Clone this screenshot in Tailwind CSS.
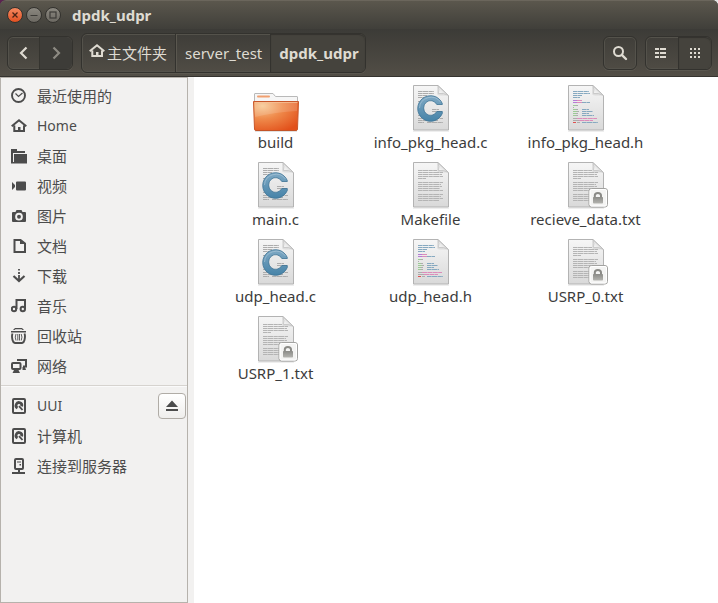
<!DOCTYPE html>
<html lang="zh-CN">
<head>
<meta charset="utf-8">
<title>dpdk_udpr</title>
<script src="https://cdn.jsdelivr.net/npm/@tailwindcss/browser@4"></script>
</head>
<body class="min-h-screen flex flex-col bg-white font-['Noto_Sans','Noto_Sans_CJK_SC',sans-serif] text-[15px] leading-5 text-[#3c3c3c]">

<svg class="absolute size-0" aria-hidden="true">
  <defs>
    <linearGradient id="paper" x1="0" y1="0" x2="0" y2="1"><stop offset="0" stop-color="#f6f6f6"/><stop offset="1" stop-color="#d9d9d9"/></linearGradient>
    <linearGradient id="fold" x1="0" y1="1" x2="1" y2="0"><stop offset="0" stop-color="#ffffff"/><stop offset=".5" stop-color="#e4e4e4"/><stop offset="1" stop-color="#b8b8b8"/></linearGradient>
    <linearGradient id="blue" x1="0" y1="0" x2="0" y2="1"><stop offset="0" stop-color="#7fa9c4"/><stop offset="1" stop-color="#4683a8"/></linearGradient>
    <radialGradient id="orange" cx=".2" cy=".15" r="1"><stop offset="0" stop-color="#f7c892"/><stop offset=".45" stop-color="#ef8a4b"/><stop offset="1" stop-color="#e2501a"/></radialGradient>
    <linearGradient id="lockfill" x1="0" y1="0" x2="0" y2="1"><stop offset="0" stop-color="#8b8b87"/><stop offset="1" stop-color="#b4b4b0"/></linearGradient>

    <symbol id="page" viewBox="0 0 48 48">
      <path d="M6 47.2H42" stroke="#000" stroke-opacity=".1"/>
      <path d="M6.500 1.500H31L41.500 11.500V46H6.500Z" fill="url(#paper)" stroke="#b3b3b3"/>
      <path d="M30 2V9Q30 11.500 33 11.500H41Z" fill="#000" fill-opacity=".08"/>
      <path d="M31 2Q32.500 5 31.500 9.500Q37 8.800 41 11.200Z" fill="url(#fold)" stroke="#bdbdbd" stroke-width=".7"/>
    </symbol>
    <symbol id="text" viewBox="0 0 48 48">
      <use href="#page"/>
      <path d="M11 9.500H30M11 11.500H36M11 13.500H35M11 15.500H36M11 17.500H19M11 21.500H36M11 23.500H34M11 25.500H35M11 27.500H33M11 29.500H36M11 33.500H36M11 35.500H34M11 37.500H36M11 39.500H32" stroke="#b4b4b4" stroke-dasharray="4 .4 6 .4"/>
    </symbol>
    <symbol id="csource" viewBox="0 0 48 48">
      <use href="#page"/>
      <path d="M11 7.500H27M11 9.500H27M11 11.500H20M11 13.500H17M11 17.500H20M25 25.500H32M25 27.500H35M11 31.500H18M11 34.500H36M11 36.500H31M11 38.500H17M20 38.500H36" stroke="#acacac" stroke-dasharray="4 .4 6 .4"/>
      <path d="M35.300 19.500A12.800 12.800 0 1 0 35.300 29.500L35.300 27.500H29.800A7 7.400 0 1 1 29.800 20.500H35.300Z" fill="url(#blue)" stroke="#3c7294" stroke-width=".8"/>
      <path d="M12.500 24A11.600 11.400 0 0 1 33.500 18" fill="none" stroke="#b3cddd" stroke-opacity=".7" stroke-width=".8"/>
    </symbol>
    <symbol id="header" viewBox="0 0 48 48">
      <use href="#page"/>
      <path d="M11 7.500H27M11 9.500H28M11 11.500H20M11 13.500H18M20 18.500H28M20 25.500H27M20 27.500H31M20 29.500H27M20 31.500H32M20 38.500H36" stroke="#86a9c0" stroke-dasharray="4 .4 6 .4"/>
      <path d="M11 16.500H15M11 18.500H15" stroke="#b57bd6"/>
      <path d="M15 16.500H20M15 18.500H20M15 34.500H35M17 36.500H31" stroke="#dc8cba" stroke-dasharray="5 .4"/>
      <path d="M11 21.500H14M11 25.500H14M11 27.500H15M11 29.500H14M11 31.500H14" stroke="#9bcb94"/>
      <path d="M14 21.500H16M11 23.500H12M14 25.500H16M15 27.500H17M14 29.500H16M14 31.500H16M11 34.500H15M11 36.500H17M15 38.500H18" stroke="#acacac"/>
      <path d="M11 38.500H14" stroke="#e05050"/>
    </symbol>
    <symbol id="locked" viewBox="0 0 48 48">
      <use href="#text"/>
      <rect x="27" y="27.500" width="18.500" height="18.500" rx="2.500" fill="#f4f4f3" stroke="#a2a2a0"/>
      <rect x="28" y="28.500" width="16.500" height="16.500" rx="1.500" fill="none" stroke="#fff"/>
      <path d="M32.800 37V34.500Q32.800 32 35.900 32Q39 32 39 34.500V37" fill="none" stroke="#8a8a86" stroke-width="2"/>
      <rect x="31" y="36" width="10" height="6.500" rx=".8" fill="url(#lockfill)"/>
    </symbol>
    <symbol id="folder" viewBox="0 0 48 48">
      <path d="M2.500 18V10Q2.500 9.500 3 9.500H21L23.500 12.500H45Q45.500 12.500 45.500 13V18Z" fill="#f6f6f6" stroke="#b9b9b9"/>
      <rect x="5" y="11.500" width="13" height="2" rx="1" fill="#f1a070"/>
      <path d="M1.500 17.500H46.500L45.500 45Q45.400 46.500 44 46.500H4Q2.600 46.500 2.500 45Z" fill="url(#orange)" stroke="#c9572a"/>
      <path d="M2.700 18.700H45.300L45 27Q24 28 3 33Z" fill="#fff" fill-opacity=".14"/>
      <path d="M3 18.500H45.500" stroke="#f8c49c" stroke-opacity=".8"/>
      <path d="M3 47.300H45" stroke="#000" stroke-opacity=".15"/>
    </symbol>
    <symbol id="house" viewBox="0 0 16 16">
      <path d="M.7 8.300L8 2.200L15.300 8.300M3.300 7.500V13H13V7.500" fill="none" stroke="currentColor" stroke-width="2"/>
      <path d="M7 9H9.500V13H7Z" fill="currentColor"/>
    </symbol>
    <symbol id="disk" viewBox="0 0 16 16">
      <rect x="2" y="1" width="12" height="14" rx="1" fill="none" stroke="currentColor" stroke-width="2"/>
      <path d="M6.500 10A2.900 2.900 0 1 1 10.700 8.300" fill="none" stroke="currentColor" stroke-width="2.700"/>
      <path d="M8 8.200L11.500 12" stroke="currentColor" stroke-width="1.800"/>
    </symbol>
  </defs>
</svg>

<div class="bg-linear-to-r from-[#5b2350] to-[#e4e4e4]">
<header class="rounded-t-md bg-[#3c3b37] text-[#dfdbd2]">
  <div class="flex h-[29px] items-center gap-[3px] rounded-t-md border-t border-[#6b665c] bg-linear-to-b from-[#5b574d] to-[#403f3a] px-[7px]">
    <button type="button" aria-label="关闭" class="size-4 rounded-full border border-[#33322e] bg-linear-to-b from-[#f5895f] to-[#e2501f] text-[#4a2415]">
      <svg viewBox="0 0 14 14" class="size-full"><path d="M4.500 4.500L9.500 9.500M9.500 4.500L4.500 9.500" stroke="currentColor" stroke-width="1.300"/></svg>
    </button>
    <button type="button" aria-label="最小化" class="size-4 rounded-full border border-[#33322e] bg-linear-to-b from-[#8b8880] to-[#6c6962] text-[#3c3b37]">
      <svg viewBox="0 0 14 14" class="size-full"><path d="M3.500 7.500H10.500" stroke="currentColor"/></svg>
    </button>
    <button type="button" aria-label="最大化" class="size-4 rounded-full border border-[#33322e] bg-linear-to-b from-[#8b8880] to-[#6c6962] text-[#3c3b37]">
      <svg viewBox="0 0 14 14" class="size-full"><rect x="4" y="4" width="6" height="6" fill="none" stroke="currentColor" stroke-width="1.200"/></svg>
    </button>
    <h1 class="ml-2 font-bold">dpdk_udpr</h1>
  </div>

  <div class="flex h-12 items-center border-b border-[#35332f] bg-linear-to-b from-[#3c3b37] to-[#524e46] pr-1.5 pl-[7px]">
    <div class="flex h-[34px] rounded-md border border-[#33322e] shadow-[inset_0_0_0_1px_#54524b,0_1px_0_#5a574f]">
      <button type="button" aria-label="后退" class="flex w-8 items-center justify-center border-r border-[#35342f]">
        <svg viewBox="0 0 16 16" class="size-4"><path d="M10.500 2.500L5 8L10.500 13.500" fill="none" stroke="currentColor" stroke-width="2.200"/></svg>
      </button>
      <button type="button" aria-label="前进" disabled class="flex w-8 items-center justify-center rounded-r-md bg-[#3d3c38] text-[#8d8a82]">
        <svg viewBox="0 0 16 16" class="size-4"><path d="M5.500 2.500L11 8L5.500 13.500" fill="none" stroke="currentColor" stroke-width="2.200"/></svg>
      </button>
    </div>

    <nav aria-label="路径" class="ml-2 flex h-10 rounded-md border border-[#33322e] shadow-[inset_0_0_0_1px_#54524b,0_1px_0_#5a574f]">
      <a href="#" class="flex items-center border-r border-[#33322e] pr-2 pl-[7px]">
        <svg class="mr-0.5 mb-1 size-4"><use href="#house"/></svg><span>主文件夹</span>
      </a>
      <a href="#" class="flex items-center border-r border-l border-r-[#33322e] border-l-[#5a574f] px-2">server_test</a>
      <a href="#" aria-current="page" class="flex items-center rounded-r-md bg-[#45433d] pr-1.5 pl-2 font-bold shadow-[inset_0_1px_1px_#33322e]">dpdk_udpr</a>
    </nav>

    <button type="button" aria-label="搜索" class="ml-auto flex h-[34px] w-[34px] items-center justify-center rounded-md border border-[#33322e] shadow-[inset_0_0_0_1px_#54524b,0_1px_0_#5a574f]">
      <svg viewBox="0 0 16 16" class="size-4"><circle cx="6.500" cy="6.500" r="4.500" fill="none" stroke="currentColor" stroke-width="2"/><path d="M9.800 9.800L14 14" stroke="currentColor" stroke-width="2.400" stroke-linecap="round"/></svg>
    </button>
    <div class="ml-2 flex h-[34px] rounded-md border border-[#33322e] shadow-[inset_0_0_0_1px_#54524b,0_1px_0_#5a574f]">
      <button type="button" aria-label="列表视图" class="flex w-8 items-center justify-center">
        <svg viewBox="0 0 16 16" class="size-4"><path d="M1 4H5M6 4H12M1 8H5M6 8H12M1 12H5M6 12H12" stroke="currentColor" stroke-width="2"/></svg>
      </button>
      <button type="button" aria-label="图标视图" aria-pressed="true" class="flex w-[33px] items-center justify-center rounded-r-md border-l border-[#33322e] bg-[#45433d] shadow-[inset_0_1px_1px_#33322e]">
        <svg viewBox="0 0 16 16" class="size-4"><path d="M3 4H5M7 4H9M11 4H13M3 8H5M7 8H9M11 8H13M3 12H5M7 12H9M11 12H13" stroke="currentColor" stroke-width="2"/></svg>
      </button>
    </div>
  </div>
</header>
</div>

<div class="flex flex-1">
  <aside class="flex w-[194px] shrink-0 bg-[#f2f1f0] pr-1.5 text-[#4c4c4c]">
    <nav aria-label="位置" class="flex-1 border border-[#b6b2ac] pt-[3px]">
      <ul>
        <li><a href="#" class="flex h-[30px] items-center gap-2.5 pl-2.5"><svg viewBox="0 0 16 16" class="size-4"><circle cx="7.500" cy="7.500" r="6.500" fill="none" stroke="currentColor" stroke-width="1.900"/><path d="M4.500 5.500L7.500 8.500L11.500 5" fill="none" stroke="currentColor" stroke-width="1.200"/></svg>最近使用的</a></li>
        <li><a href="#" class="flex h-[30px] items-center gap-2.5 pl-2.5"><svg class="size-4"><use href="#house"/></svg><span class="text-sm">Home</span></a></li>
        <li><a href="#" class="flex h-[30px] items-center gap-2.5 pl-2.5"><svg viewBox="0 0 16 16" class="size-4"><path d="M0 1H6V3H14V5H2V14H3V6H16V15.500H0Z" fill="currentColor"/></svg>桌面</a></li>
        <li><a href="#" class="flex h-[30px] items-center gap-2.5 pl-2.5"><svg viewBox="0 0 16 16" class="size-4"><path d="M1 4L4 7V9L1 12ZM6 3.500H14Q15 3.500 15 4.500V11.500Q15 12.500 14 12.500H6Q5 12.500 5 11.500V4.500Q5 3.500 6 3.500Z" fill="currentColor"/></svg>视频</a></li>
        <li><a href="#" class="flex h-[30px] items-center gap-2.5 pl-2.5"><svg viewBox="0 0 16 16" class="size-4"><path d="M5.500 2H10.500L11.500 4H14Q15 4 15 5V13Q15 14 14 14H2Q1 14 1 13V5Q1 4 2 4H4.500Z" fill="currentColor"/><circle cx="8" cy="8.700" r="2.900" fill="none" stroke="#f2f1f0" stroke-width="1.900"/></svg>图片</a></li>
        <li><a href="#" class="flex h-[30px] items-center gap-2.5 pl-2.5"><svg viewBox="0 0 16 16" class="size-4"><path d="M3.500 2H9.500L14 5.500V14H3.500Z" fill="none" stroke="currentColor" stroke-width="2"/><path d="M9 2V6H14Z" fill="currentColor"/></svg>文档</a></li>
        <li><a href="#" class="flex h-[30px] items-center gap-2.5 pl-2.5"><svg viewBox="0 0 16 16" class="size-4"><path d="M8 1V2.500M8 4V6M8 7V13" stroke="currentColor" stroke-width="1.800"/><path d="M2.500 8L8 13L13.500 8" fill="none" stroke="currentColor" stroke-width="2.200"/></svg>下载</a></li>
        <li><a href="#" class="flex h-[30px] items-center gap-2.5 pl-2.5"><svg viewBox="0 0 16 16" class="size-4"><circle cx="3" cy="11" r="2.200" fill="none" stroke="currentColor" stroke-width="2"/><circle cx="11.800" cy="11" r="2.200" fill="none" stroke="currentColor" stroke-width="2"/><path d="M5.500 11V2H14V11" fill="none" stroke="currentColor" stroke-width="2"/></svg>音乐</a></li>
        <li><a href="#" class="flex h-[30px] items-center gap-2.5 pl-2.5"><svg viewBox="0 0 16 16" class="size-4"><path d="M0 3H15V4.500H0ZM2 2L4 0H11L13 2H11.500L10.500 1.300H4.500L3.500 2Z" fill="currentColor"/><path d="M1.500 5.500Q.5 8 1.500 12Q2 14.500 4 15H11Q13 14.500 13.500 12Q14.500 8 13.500 5.500" fill="none" stroke="currentColor" stroke-width="1.900"/><path d="M5 6Q3.500 9 5 12.500M6.800 6V12.500M8.500 6V12.500M10.200 6Q11.700 9 10.200 12.500" fill="none" stroke="currentColor" stroke-width=".9"/></svg>回收站</a></li>
        <li><a href="#" class="flex h-[30px] items-center gap-2.5 pl-2.5"><svg viewBox="0 0 16 16" class="size-4"><path d="M7 3V2H15V8.500H12" fill="none" stroke="currentColor" stroke-width="2"/><rect x="1" y="5" width="8.500" height="6" rx="1" fill="none" stroke="currentColor" stroke-width="2"/><path d="M3 12H7.500L9 15H1.500ZM11.500 9H14L15 12H11.500Z" fill="currentColor"/></svg>网络</a></li>
      </ul>
      <ul class="mt-1 border-t border-[#d6d3cf] pt-[5px] shadow-[inset_0_1px_0_#fafafa]">
        <li class="flex h-[30px] items-center">
          <a href="#" class="flex flex-1 items-center gap-2.5 pl-2.5"><svg class="size-4"><use href="#disk"/></svg><span class="text-sm">UUI</span></a>
          <button type="button" aria-label="弹出 UUI" class="mr-px flex h-[26px] w-7 items-center justify-center rounded border border-[#b0aca6] bg-linear-to-b from-white to-[#efeeec]">
            <svg viewBox="0 0 14 14" class="size-3.5"><path d="M7 1.500L13 8H1ZM1 10H13V12H1Z" fill="currentColor"/></svg>
          </button>
        </li>
        <li><a href="#" class="flex h-[30px] items-center gap-2.5 pl-2.5"><svg class="size-4"><use href="#disk"/></svg>计算机</a></li>
        <li><a href="#" class="flex h-[30px] items-center gap-2.5 pl-2.5"><svg viewBox="0 0 16 16" class="size-4"><rect x="4" y="1" width="8" height="10" rx="1" fill="none" stroke="currentColor" stroke-width="2"/><path d="M6 4H10" stroke="currentColor"/><path d="M8.500 6H10V7.500H8.500Z" fill="currentColor"/><path d="M8 11V15M1 15H14" stroke="currentColor" stroke-width="2"/></svg>连接到服务器</a></li>
      </ul>
    </nav>
  </aside>

  <main class="flex-1 bg-white pt-[7px] pl-1">
    <ul class="grid grid-cols-[repeat(auto-fill,155px)] gap-y-[9px]">
      <li><a href="#" class="flex flex-col items-center"><svg class="size-12"><use href="#folder"/></svg><span>build</span></a></li>
      <li><a href="#" class="flex flex-col items-center"><svg class="size-12"><use href="#csource"/></svg><span>info_pkg_head.c</span></a></li>
      <li><a href="#" class="flex flex-col items-center"><svg class="size-12"><use href="#header"/></svg><span>info_pkg_head.h</span></a></li>
      <li><a href="#" class="flex flex-col items-center"><svg class="size-12"><use href="#csource"/></svg><span>main.c</span></a></li>
      <li><a href="#" class="flex flex-col items-center"><svg class="size-12"><use href="#text"/></svg><span>Makefile</span></a></li>
      <li><a href="#" class="flex flex-col items-center"><svg class="size-12"><use href="#locked"/></svg><span>recieve_data.txt</span></a></li>
      <li><a href="#" class="flex flex-col items-center"><svg class="size-12"><use href="#csource"/></svg><span>udp_head.c</span></a></li>
      <li><a href="#" class="flex flex-col items-center"><svg class="size-12"><use href="#header"/></svg><span>udp_head.h</span></a></li>
      <li><a href="#" class="flex flex-col items-center"><svg class="size-12"><use href="#locked"/></svg><span>USRP_0.txt</span></a></li>
      <li><a href="#" class="flex flex-col items-center"><svg class="size-12"><use href="#locked"/></svg><span>USRP_1.txt</span></a></li>
    </ul>
  </main>
</div>
</body>
</html>
